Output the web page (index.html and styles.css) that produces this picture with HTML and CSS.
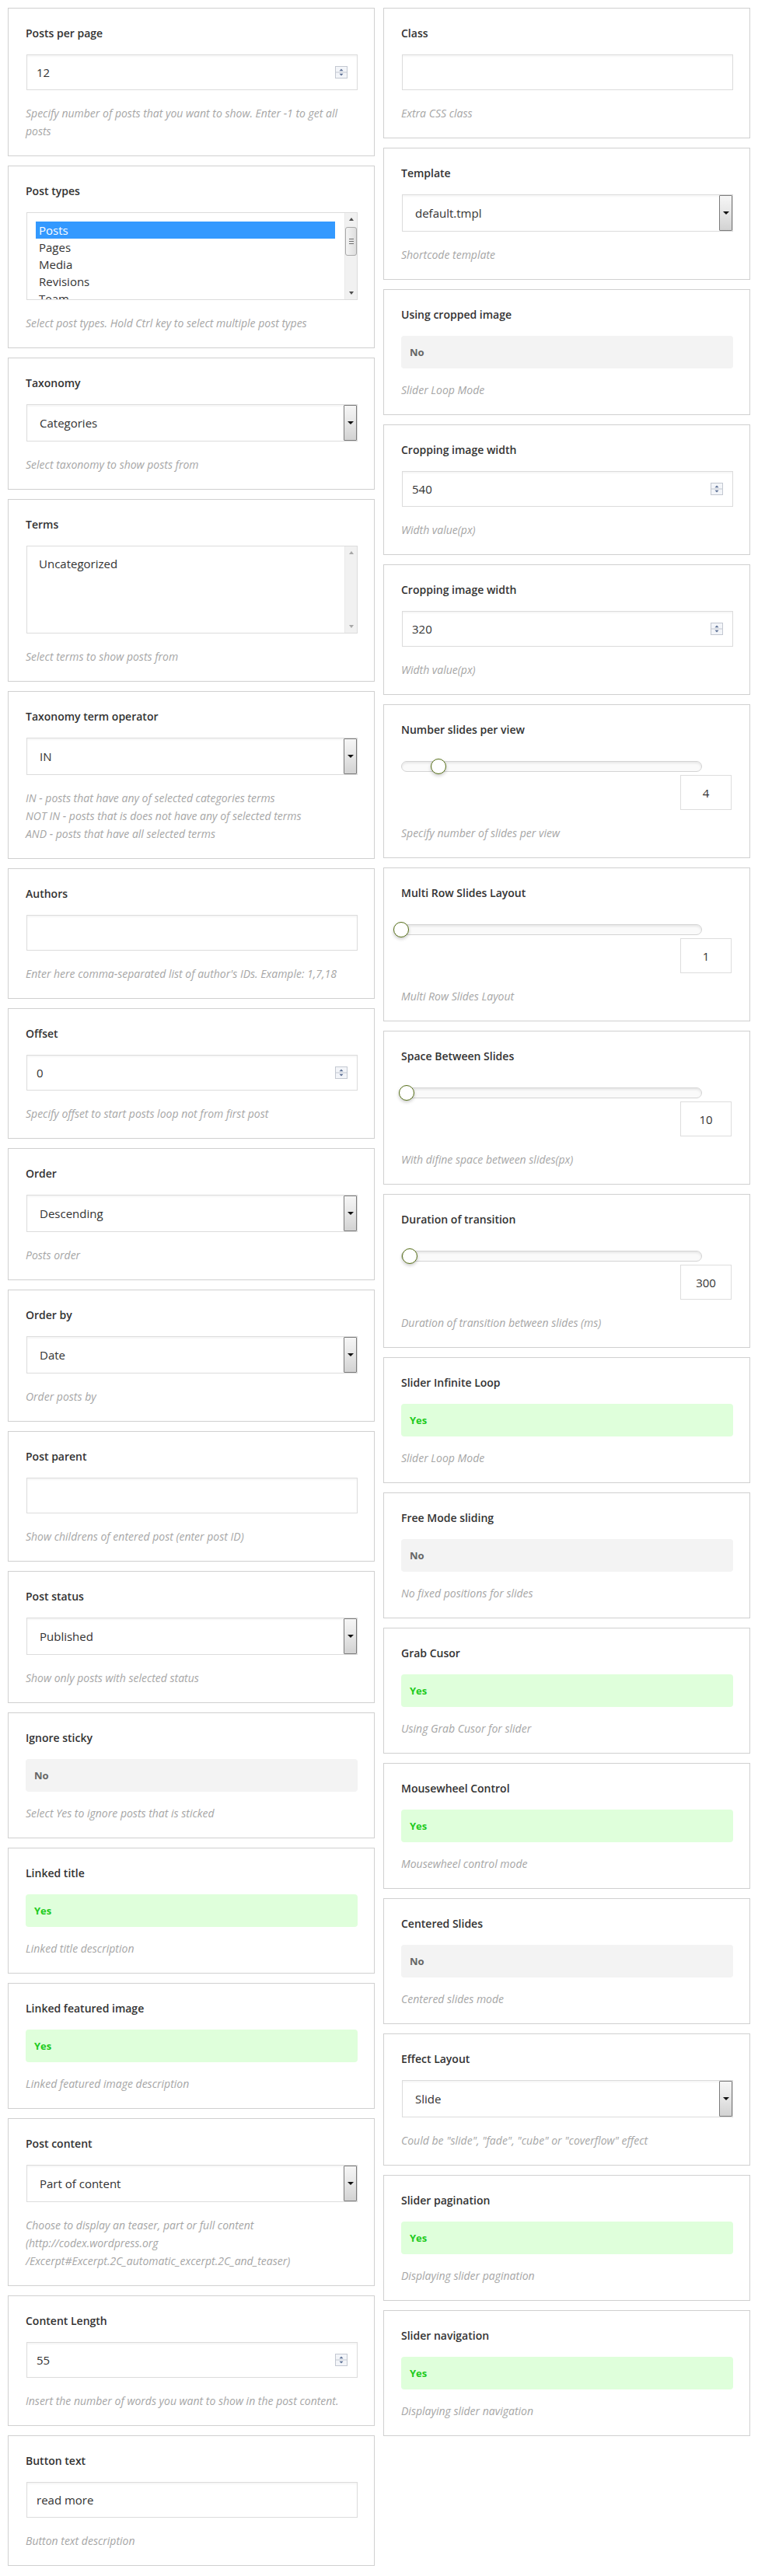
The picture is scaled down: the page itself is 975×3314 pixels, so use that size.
FILE: index.html
```html
<!DOCTYPE html>
<html lang="en">
<head>
<meta charset="utf-8">
<title>Shortcode settings</title>
<link rel="stylesheet" href="styles.css">
</head>
<body>
<div class="page">
  <div class="col">
    <div class="card">
      <div class="label">Posts per page</div>
      <div class="input"><span class="val">12</span><svg class="spin" width="16" height="16" viewBox="0 0 16 16"><rect x="0.5" y="0.5" width="15" height="15" fill="#f3f5f9" stroke="#c3c8d1"/><line x1="0" y1="8" x2="16" y2="8" stroke="#c3c8d1"/><path d="M5.5 6.2h5L8 3.6z" fill="#5b6f95"/><path d="M5.5 9.8h5L8 12.4z" fill="#5b6f95"/></svg></div>
      <div class="help">Specify number of posts that you want to show. Enter -1 to get all posts</div>
    </div>
    <div class="card">
      <div class="label">Post types</div>
      <div class="listbox">
        <div class="list-items">
          <div class="opt sel">Posts</div>
          <div class="opt">Pages</div>
          <div class="opt">Media</div>
          <div class="opt">Revisions</div>
          <div class="opt">Team</div>
        </div>
        <div class="scrollbar">
          <span class="arr up"></span>
          <span class="thumb"><i></i><i></i><i></i></span>
          <span class="arr down"></span>
        </div>
      </div>
      <div class="help">Select post types. Hold Ctrl key to select multiple post types</div>
    </div>
    <div class="card">
      <div class="label">Taxonomy</div>
      <div class="select"><span class="val">Categories</span><span class="drop"></span></div>
      <div class="help">Select taxonomy to show posts from</div>
    </div>
    <div class="card">
      <div class="label">Terms</div>
      <div class="listbox">
        <div class="list-items">
          <div class="opt">Uncategorized</div>
        </div>
        <div class="scrollbar off">
          <span class="arr up"></span>
          <span class="fill"></span>
          <span class="arr down"></span>
        </div>
      </div>
      <div class="help">Select terms to show posts from</div>
    </div>
    <div class="card">
      <div class="label">Taxonomy term operator</div>
      <div class="select"><span class="val">IN</span><span class="drop"></span></div>
      <div class="help">IN - posts that have any of selected categories terms<br>NOT IN - posts that is does not have any of selected terms<br>AND - posts that have all selected terms</div>
    </div>
    <div class="card">
      <div class="label">Authors</div>
      <div class="input"></div>
      <div class="help">Enter here comma-separated list of author's IDs. Example: 1,7,18</div>
    </div>
    <div class="card">
      <div class="label">Offset</div>
      <div class="input"><span class="val">0</span><svg class="spin" width="16" height="16" viewBox="0 0 16 16"><rect x="0.5" y="0.5" width="15" height="15" fill="#f3f5f9" stroke="#c3c8d1"/><line x1="0" y1="8" x2="16" y2="8" stroke="#c3c8d1"/><path d="M5.5 6.2h5L8 3.6z" fill="#5b6f95"/><path d="M5.5 9.8h5L8 12.4z" fill="#5b6f95"/></svg></div>
      <div class="help">Specify offset to start posts loop not from first post</div>
    </div>
    <div class="card">
      <div class="label">Order</div>
      <div class="select"><span class="val">Descending</span><span class="drop"></span></div>
      <div class="help">Posts order</div>
    </div>
    <div class="card">
      <div class="label">Order by</div>
      <div class="select"><span class="val">Date</span><span class="drop"></span></div>
      <div class="help">Order posts by</div>
    </div>
    <div class="card">
      <div class="label">Post parent</div>
      <div class="input"></div>
      <div class="help">Show childrens of entered post (enter post ID)</div>
    </div>
    <div class="card">
      <div class="label">Post status</div>
      <div class="select"><span class="val">Published</span><span class="drop"></span></div>
      <div class="help">Show only posts with selected status</div>
    </div>
    <div class="card">
      <div class="label">Ignore sticky</div>
      <div class="toggle no">No</div>
      <div class="help">Select Yes to ignore posts that is sticked</div>
    </div>
    <div class="card">
      <div class="label">Linked title</div>
      <div class="toggle yes">Yes</div>
      <div class="help">Linked title description</div>
    </div>
    <div class="card">
      <div class="label">Linked featured image</div>
      <div class="toggle yes">Yes</div>
      <div class="help">Linked featured image description</div>
    </div>
    <div class="card">
      <div class="label">Post content</div>
      <div class="select"><span class="val">Part of content</span><span class="drop"></span></div>
      <div class="help">Choose to display an teaser, part or full content<br>(http://codex.wordpress.org<br>/Excerpt#Excerpt.2C_automatic_excerpt.2C_and_teaser)</div>
    </div>
    <div class="card">
      <div class="label">Content Length</div>
      <div class="input"><span class="val">55</span><svg class="spin" width="16" height="16" viewBox="0 0 16 16"><rect x="0.5" y="0.5" width="15" height="15" fill="#f3f5f9" stroke="#c3c8d1"/><line x1="0" y1="8" x2="16" y2="8" stroke="#c3c8d1"/><path d="M5.5 6.2h5L8 3.6z" fill="#5b6f95"/><path d="M5.5 9.8h5L8 12.4z" fill="#5b6f95"/></svg></div>
      <div class="help">Insert the number of words you want to show in the post content.</div>
    </div>
    <div class="card">
      <div class="label">Button text</div>
      <div class="input"><span class="val">read more</span></div>
      <div class="help">Button text description</div>
    </div>
  </div>

  <div class="col">
    <div class="card">
      <div class="label">Class</div>
      <div class="input"></div>
      <div class="help">Extra CSS class</div>
    </div>
    <div class="card">
      <div class="label">Template</div>
      <div class="select"><span class="val">default.tmpl</span><span class="drop"></span></div>
      <div class="help">Shortcode template</div>
    </div>
    <div class="card">
      <div class="label">Using cropped image</div>
      <div class="toggle no">No</div>
      <div class="help">Slider Loop Mode</div>
    </div>
    <div class="card">
      <div class="label">Cropping image width</div>
      <div class="input"><span class="val">540</span><svg class="spin" width="16" height="16" viewBox="0 0 16 16"><rect x="0.5" y="0.5" width="15" height="15" fill="#f3f5f9" stroke="#c3c8d1"/><line x1="0" y1="8" x2="16" y2="8" stroke="#c3c8d1"/><path d="M5.5 6.2h5L8 3.6z" fill="#5b6f95"/><path d="M5.5 9.8h5L8 12.4z" fill="#5b6f95"/></svg></div>
      <div class="help">Width value(px)</div>
    </div>
    <div class="card">
      <div class="label">Cropping image width</div>
      <div class="input"><span class="val">320</span><svg class="spin" width="16" height="16" viewBox="0 0 16 16"><rect x="0.5" y="0.5" width="15" height="15" fill="#f3f5f9" stroke="#c3c8d1"/><line x1="0" y1="8" x2="16" y2="8" stroke="#c3c8d1"/><path d="M5.5 6.2h5L8 3.6z" fill="#5b6f95"/><path d="M5.5 9.8h5L8 12.4z" fill="#5b6f95"/></svg></div>
      <div class="help">Width value(px)</div>
    </div>
    <div class="card">
      <div class="label">Number slides per view</div>
      <div class="slider"><div class="track"></div><span class="knob" style="left:38px"></span></div>
      <div class="numbox">4</div>
      <div class="help">Specify number of slides per view</div>
    </div>
    <div class="card">
      <div class="label">Multi Row Slides Layout</div>
      <div class="slider"><div class="track"></div><span class="knob" style="left:-10px"></span></div>
      <div class="numbox">1</div>
      <div class="help">Multi Row Slides Layout</div>
    </div>
    <div class="card">
      <div class="label">Space Between Slides</div>
      <div class="slider"><div class="track"></div><span class="knob" style="left:-3px"></span></div>
      <div class="numbox">10</div>
      <div class="help">With difine space between slides(px)</div>
    </div>
    <div class="card">
      <div class="label">Duration of transition</div>
      <div class="slider"><div class="track"></div><span class="knob" style="left:1px"></span></div>
      <div class="numbox">300</div>
      <div class="help">Duration of transition between slides (ms)</div>
    </div>
    <div class="card">
      <div class="label">Slider Infinite Loop</div>
      <div class="toggle yes">Yes</div>
      <div class="help">Slider Loop Mode</div>
    </div>
    <div class="card">
      <div class="label">Free Mode sliding</div>
      <div class="toggle no">No</div>
      <div class="help">No fixed positions for slides</div>
    </div>
    <div class="card">
      <div class="label">Grab Cusor</div>
      <div class="toggle yes">Yes</div>
      <div class="help">Using Grab Cusor for slider</div>
    </div>
    <div class="card">
      <div class="label">Mousewheel Control</div>
      <div class="toggle yes">Yes</div>
      <div class="help">Mousewheel control mode</div>
    </div>
    <div class="card">
      <div class="label">Centered Slides</div>
      <div class="toggle no">No</div>
      <div class="help">Centered slides mode</div>
    </div>
    <div class="card">
      <div class="label">Effect Layout</div>
      <div class="select"><span class="val">Slide</span><span class="drop"></span></div>
      <div class="help">Could be "slide", "fade", "cube" or "coverflow" effect</div>
    </div>
    <div class="card">
      <div class="label">Slider pagination</div>
      <div class="toggle yes">Yes</div>
      <div class="help">Displaying slider pagination</div>
    </div>
    <div class="card">
      <div class="label">Slider navigation</div>
      <div class="toggle yes">Yes</div>
      <div class="help">Displaying slider navigation</div>
    </div>
  </div>
</div>
</body>
</html>
```

FILE: styles.css
```css
* { box-sizing: border-box; }

body {
  margin: 0;
  background: #fff;
  font-family: "Open Sans", "Noto Sans", "Liberation Sans", sans-serif;
  color: #333;
}

.page {
  display: grid;
  grid-template-columns: 472px 472px;
  column-gap: 11px;
  padding: 10px;
  align-items: start;
}

.col {
  display: flex;
  flex-direction: column;
  gap: 12px;
}

.card {
  border: 1px solid #d0d0d0;
  background: #fff;
  padding: 22px 21px 20px 22px;
}

.label {
  font-size: 14px;
  font-weight: 600;
  line-height: 20px;
  color: #333;
  margin-bottom: 17px;
}

.help {
  font-size: 14px;
  font-style: italic;
  line-height: 23px;
  color: #a6a6a6;
  margin-top: 18px;
}

.toggle + .help { margin-top: 16px; }

/* text / number inputs */
.input {
  margin-left: 1px;
  height: 46px;
  border: 1px solid #dcdcdc;
  box-shadow: inset 0 2px 2px rgba(0, 0, 0, 0.04);
  display: flex;
  align-items: center;
  justify-content: space-between;
  padding: 0 12px;
  font-size: 15px;
  color: #333;
  background: #fff;
}

.spin { display: block; flex: none; }

/* drop-down selects */
.select {
  margin-left: 1px;
  height: 48px;
  border: 1px solid #dcdcdc;
  box-shadow: inset 0 2px 2px rgba(0, 0, 0, 0.04);
  display: flex;
  align-items: stretch;
  font-size: 15px;
  color: #333;
  background: #fff;
}

.select .val {
  flex: 1;
  display: flex;
  align-items: center;
  padding-left: 16px;
}

.select .drop {
  width: 17px;
  flex: none;
  border: 1px solid #7c7c7c;
  border-radius: 1px;
  background: linear-gradient(#f6f6f6, #e4e4e4 55%, #d2d2d2);
  display: flex;
  align-items: center;
  justify-content: center;
}

.select .drop::after {
  content: "";
  border-left: 4px solid transparent;
  border-right: 4px solid transparent;
  border-top: 4px solid #111;
}

/* multi-select list boxes */
.listbox {
  margin-left: 1px;
  height: 113px;
  border: 1px solid #dcdcdc;
  display: flex;
  overflow: hidden;
  background: #fff;
}

.list-items {
  flex: 1;
  padding: 11px 12px 0 11px;
  font-size: 15px;
  line-height: 22px;
  color: #333;
  overflow: hidden;
}

.opt { padding-left: 4px; white-space: nowrap; }

.opt.sel { background: #3399ff; color: #fff; }

.scrollbar {
  width: 16px;
  flex: none;
  background: #f1f1f1;
  border-left: 1px solid #e9e9e9;
  display: flex;
  flex-direction: column;
  align-items: center;
}

.scrollbar .arr {
  height: 16px;
  width: 100%;
  display: flex;
  align-items: center;
  justify-content: center;
  flex: none;
}

.scrollbar .arr.up::after {
  content: "";
  border-left: 3.5px solid transparent;
  border-right: 3.5px solid transparent;
  border-bottom: 4px solid #505050;
}

.scrollbar .arr.down { margin-top: auto; }

.scrollbar .arr.down::after {
  content: "";
  border-left: 3.5px solid transparent;
  border-right: 3.5px solid transparent;
  border-top: 4px solid #505050;
}

.scrollbar.off .arr.up::after { border-bottom-color: #a8a8a8; }
.scrollbar.off .arr.down::after { border-top-color: #a8a8a8; }

.scrollbar .thumb {
  margin-top: 2px;
  width: 15px;
  height: 37px;
  border: 1px solid #a9a9a9;
  border-radius: 3px;
  background: linear-gradient(90deg, #f4f4f4, #dedede);
  display: flex;
  flex-direction: column;
  align-items: center;
  justify-content: center;
  gap: 2px;
}

.scrollbar .thumb i {
  display: block;
  width: 6px;
  height: 1px;
  background: #6d6d6d;
}

/* yes/no toggles */
.toggle {
  height: 42px;
  border-radius: 4px;
  display: flex;
  align-items: center;
  padding-left: 11px;
  font-size: 13px;
  font-weight: 700;
}

.toggle.no { background: #f3f3f3; color: #666; }

.toggle.yes { background: #dfffdb; color: #1ecb1e; }

/* range sliders */
.slider {
  position: relative;
  width: 387px;
  height: 20px;
  margin-top: 27px;
  padding-top: 3px;
}

.track {
  height: 14px;
  border: 1px solid #d4d4d4;
  border-radius: 8px;
  background: #fafafa;
  box-shadow: inset 0 2px 3px rgba(0, 0, 0, 0.08);
}

.knob {
  position: absolute;
  top: 0;
  width: 20px;
  height: 20px;
  border-radius: 50%;
  border: 1.5px solid #566f17;
  background: #fff;
  box-shadow: 0 2px 4px rgba(0, 0, 0, 0.22);
}

.numbox {
  width: 66px;
  height: 45px;
  margin: 1px 2px 0 auto;
  border: 1px solid #dddddd;
  display: flex;
  align-items: center;
  justify-content: center;
  font-size: 15px;
  color: #333;
}
```
